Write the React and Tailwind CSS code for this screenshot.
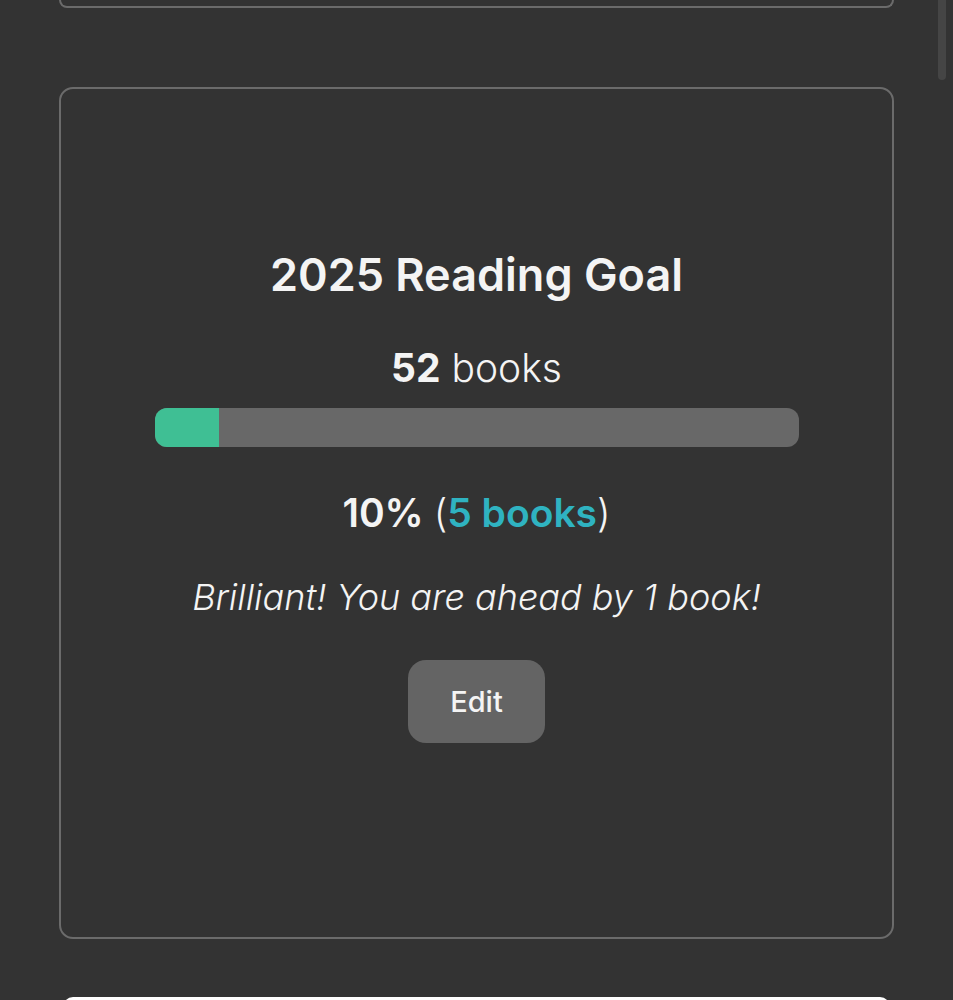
export default function App() {
  return (
    <div
      className="relative min-h-screen w-full overflow-hidden bg-[#333333] text-[#f4f4f4]"
      style={{ fontFamily: "Inter, 'Noto Sans', sans-serif" }}
    >
      {/* scrollbar thumb */}
      <div className="absolute right-[7px] top-0 h-[80px] w-[8px] rounded-b-full bg-[#454545]" />

      <div className="flex flex-col px-[59px]">
        {/* previous card bottom */}
        <div className="h-[8px] rounded-b-[14px] border-x-2 border-b-2 border-[#6b6b6b]" />

        {/* main card */}
        <div className="mt-[79px] flex h-[852px] flex-col items-center rounded-[14px] border-2 border-[#6b6b6b] pt-[160px]">
          <h1 className="text-[45px] font-semibold leading-[52px]">2025 Reading Goal</h1>
          <div className="mt-[45px] text-[39px] leading-[44px]">
            <span className="font-bold">52</span> <span className="font-light">books</span>
          </div>
          <div className="mt-[18px] h-[39px] w-[644px] overflow-hidden rounded-[12px] bg-[#686868]">
            <div className="h-full bg-[#3fbf94]" style={{ width: "10%" }} />
          </div>
          <div className="mt-[44px] text-[39px] font-semibold leading-[44px]">
            10% <span className="font-light">(</span>
            <span className="text-[#2fb3c1]">5 books</span>
            <span className="font-light">)</span>
          </div>
          <p className="mt-[42px] text-[36px] font-light italic leading-[40px]">
            Brilliant! You are ahead by 1 book!
          </p>
          <button className="mt-[43px] flex h-[83px] w-[137px] items-center justify-center rounded-[18px] bg-[#646464] text-[29px] font-medium text-[#f4f4f4]">
            Edit
          </button>
        </div>

        {/* next card top */}
        <div className="mx-[4px] mt-[58px] h-[20px] rounded-t-[10px] bg-white" />
      </div>
    </div>
  );
}
